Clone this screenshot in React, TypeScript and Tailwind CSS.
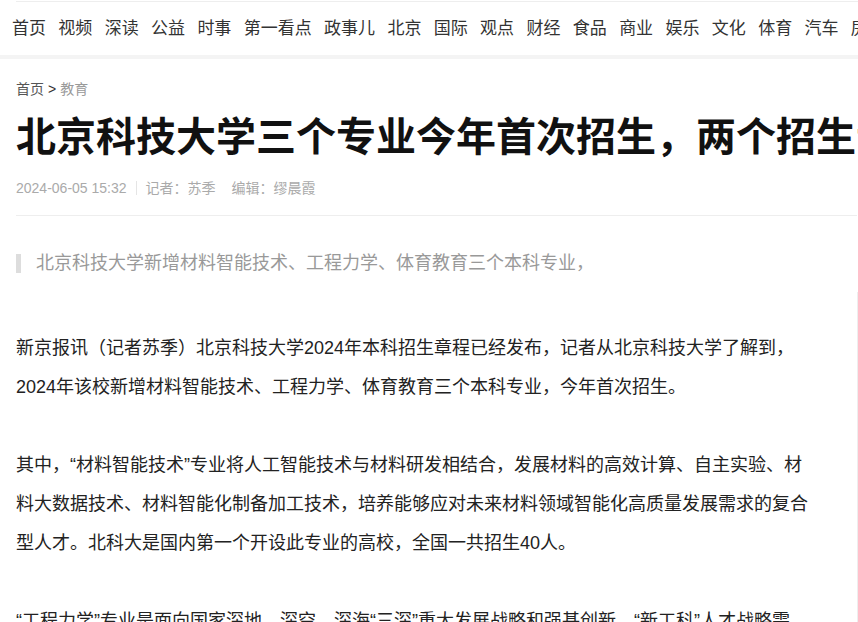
import React from "react";

const nav = ["首页", "视频", "深读", "公益", "时事", "第一看点", "政事儿", "北京", "国际", "观点", "财经", "食品", "商业", "娱乐", "文化", "体育", "汽车", "房产"];

const font = { fontFamily: '"Liberation Sans", "Noto Sans CJK SC", sans-serif' };

export default function App() {
  return (
    <div className="w-[858px] h-[622px] overflow-hidden bg-white" style={font}>
      <div className="h-[55px] flex flex-col">
        <div className="mt-px ml-4 h-px bg-[#eeeeee]" />
        <div className="flex items-center h-[53px] pl-3 whitespace-nowrap text-[17px] text-[#333333]">
          {nav.map((n) => (
            <span key={n} className="mr-[12.35px] shrink-0">{n}</span>
          ))}
        </div>
      </div>
      <div className="h-1 bg-[#f4f4f4]" />
      <div className="flex">
        <div className="w-[857px] shrink-0 pl-4">
          <div className="mt-5 text-[14px] leading-5 text-[#666666]">
            <span className="text-[#555555]">首页</span>
            <span className="text-[#333333] mx-1">&gt;</span>
            <span className="text-[#999999]">教育</span>
          </div>
          <h1 className="mt-[10px] text-[40px] leading-[56px] font-bold text-[#111111] whitespace-nowrap">
            北京科技大学三个专业今年首次招生，两个招生专业全国唯一
          </h1>
          <div className="mt-[13px] flex items-center text-[14px] leading-5 text-[#aaaaaa]">
            <span>2024-06-05 15:32</span>
            <span className="mx-[9px] w-px h-[14px] bg-[#e5e5e5]" />
            <span>记者：苏季</span>
            <span className="ml-4">编辑：缪晨霞</span>
          </div>
          <div className="mt-[17px] h-px bg-[#eeeeee]" />
          <div className="mt-[33px] flex items-center">
            <span className="w-[5px] h-[19px] bg-[#dddddd]" />
            <span className="ml-[15px] text-[18px] leading-[28px] text-[#999999]">
              北京科技大学新增材料智能技术、工程力学、体育教育三个本科专业，
            </span>
          </div>
          <div className="mt-[52px] w-[796px] text-[18px] leading-[39px] text-[#222222]">
            <p className="mb-[39px]">
              新京报讯（记者苏季）北京科技大学2024年本科招生章程已经发布，记者从北京科技大学了解到，2024年该校新增材料智能技术、工程力学、体育教育三个本科专业，今年首次招生。
            </p>
            <p className="mb-[39px]">
              其中，“材料智能技术”专业将人工智能技术与材料研发相结合，发展材料的高效计算、自主实验、材料大数据技术、材料智能化制备加工技术，培养能够应对未来材料领域智能化高质量发展需求的复合型人才。北科大是国内第一个开设此专业的高校，全国一共招生40人。
            </p>
            <p className="mb-[39px]">
              “工程力学”专业是面向国家深地、深空、深海“三深”重大发展战略和强基创新、“新工科”人才战略需求，培养具有扎实力学基础的创新人才。
            </p>
          </div>
        </div>
        <div className="mt-[233px] w-px h-[400px] shrink-0 bg-[#eeeeee]" />
      </div>
    </div>
  );
}
